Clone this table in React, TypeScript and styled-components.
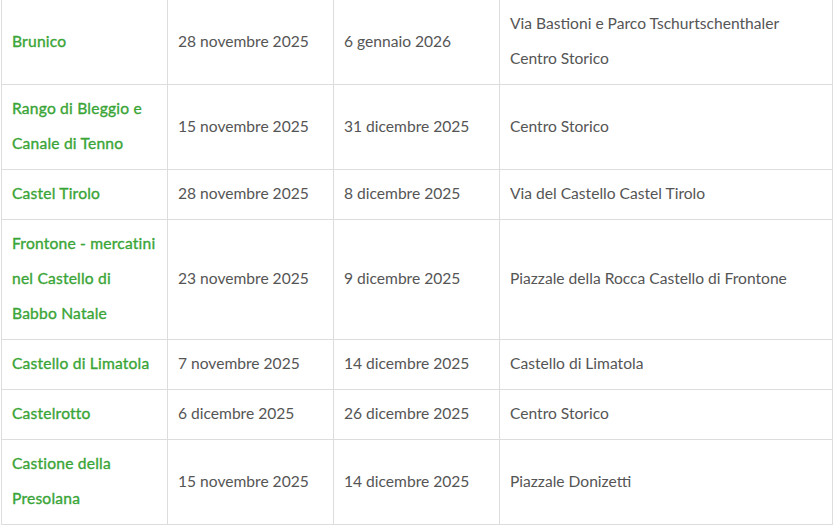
import React from "react";
import styled, { createGlobalStyle } from "styled-components";

const GlobalStyle = createGlobalStyle`
  html, body { margin: 0; padding: 0; background: #ffffff; }
  body { font-family: Lato, "Noto Sans", sans-serif; }
`;

const Wrapper = styled.div`
  padding-left: 1px;
  margin-top: -1px;
  width: 831px;
`;

const Table = styled.table`
  width: 831px;
  border-collapse: collapse;
  table-layout: fixed;
  font-family: Lato, "Noto Sans", sans-serif;
  font-size: 15.6px;
  line-height: 35px;
`;

const Col = styled.col<{ $w: number }>`
  width: ${(p) => p.$w}px;
`;

const Cell = styled.td`
  border: 1px solid #dddddd;
  padding: 6px 10px 8px;
  vertical-align: middle;
  color: #555555;
  font-weight: 400;
`;

const NameCell = styled(Cell)`
  color: #3aa537;
  font-weight: 400;
  letter-spacing: 0.2px;
  -webkit-text-stroke: 0.35px #3aa537;
`;

type Row = { name: string; start: string; end: string; place: string[] };

const rows: Row[] = [
  { name: "Brunico", start: "28 novembre 2025", end: "6 gennaio 2026", place: ["Via Bastioni e Parco Tschurtschenthaler", "Centro Storico"] },
  { name: "Rango di Bleggio e Canale di Tenno", start: "15 novembre 2025", end: "31 dicembre 2025", place: ["Centro Storico"] },
  { name: "Castel Tirolo", start: "28 novembre 2025", end: "8 dicembre 2025", place: ["Via del Castello Castel Tirolo"] },
  { name: "Frontone - mercatini nel Castello di Babbo Natale", start: "23 novembre 2025", end: "9 dicembre 2025", place: ["Piazzale della Rocca Castello di Frontone"] },
  { name: "Castello di Limatola", start: "7 novembre 2025", end: "14 dicembre 2025", place: ["Castello di Limatola"] },
  { name: "Castelrotto", start: "6 dicembre 2025", end: "26 dicembre 2025", place: ["Centro Storico"] },
  { name: "Castione della Presolana", start: "15 novembre 2025", end: "14 dicembre 2025", place: ["Piazzale Donizetti"] },
];

export default function App() {
  return (
    <>
      <GlobalStyle />
      <Wrapper>
        <Table>
          <colgroup>
            <Col $w={166} />
            <Col $w={166} />
            <Col $w={166} />
            <Col $w={333} />
          </colgroup>
          <tbody>
            {rows.map((r) => (
              <tr key={r.name}>
                <NameCell>{r.name}</NameCell>
                <Cell>{r.start}</Cell>
                <Cell>{r.end}</Cell>
                <Cell>
                  {r.place.map((p, i) => (
                    <React.Fragment key={p}>
                      {i > 0 && <br />}
                      {p}
                    </React.Fragment>
                  ))}
                </Cell>
              </tr>
            ))}
          </tbody>
        </Table>
      </Wrapper>
    </>
  );
}
